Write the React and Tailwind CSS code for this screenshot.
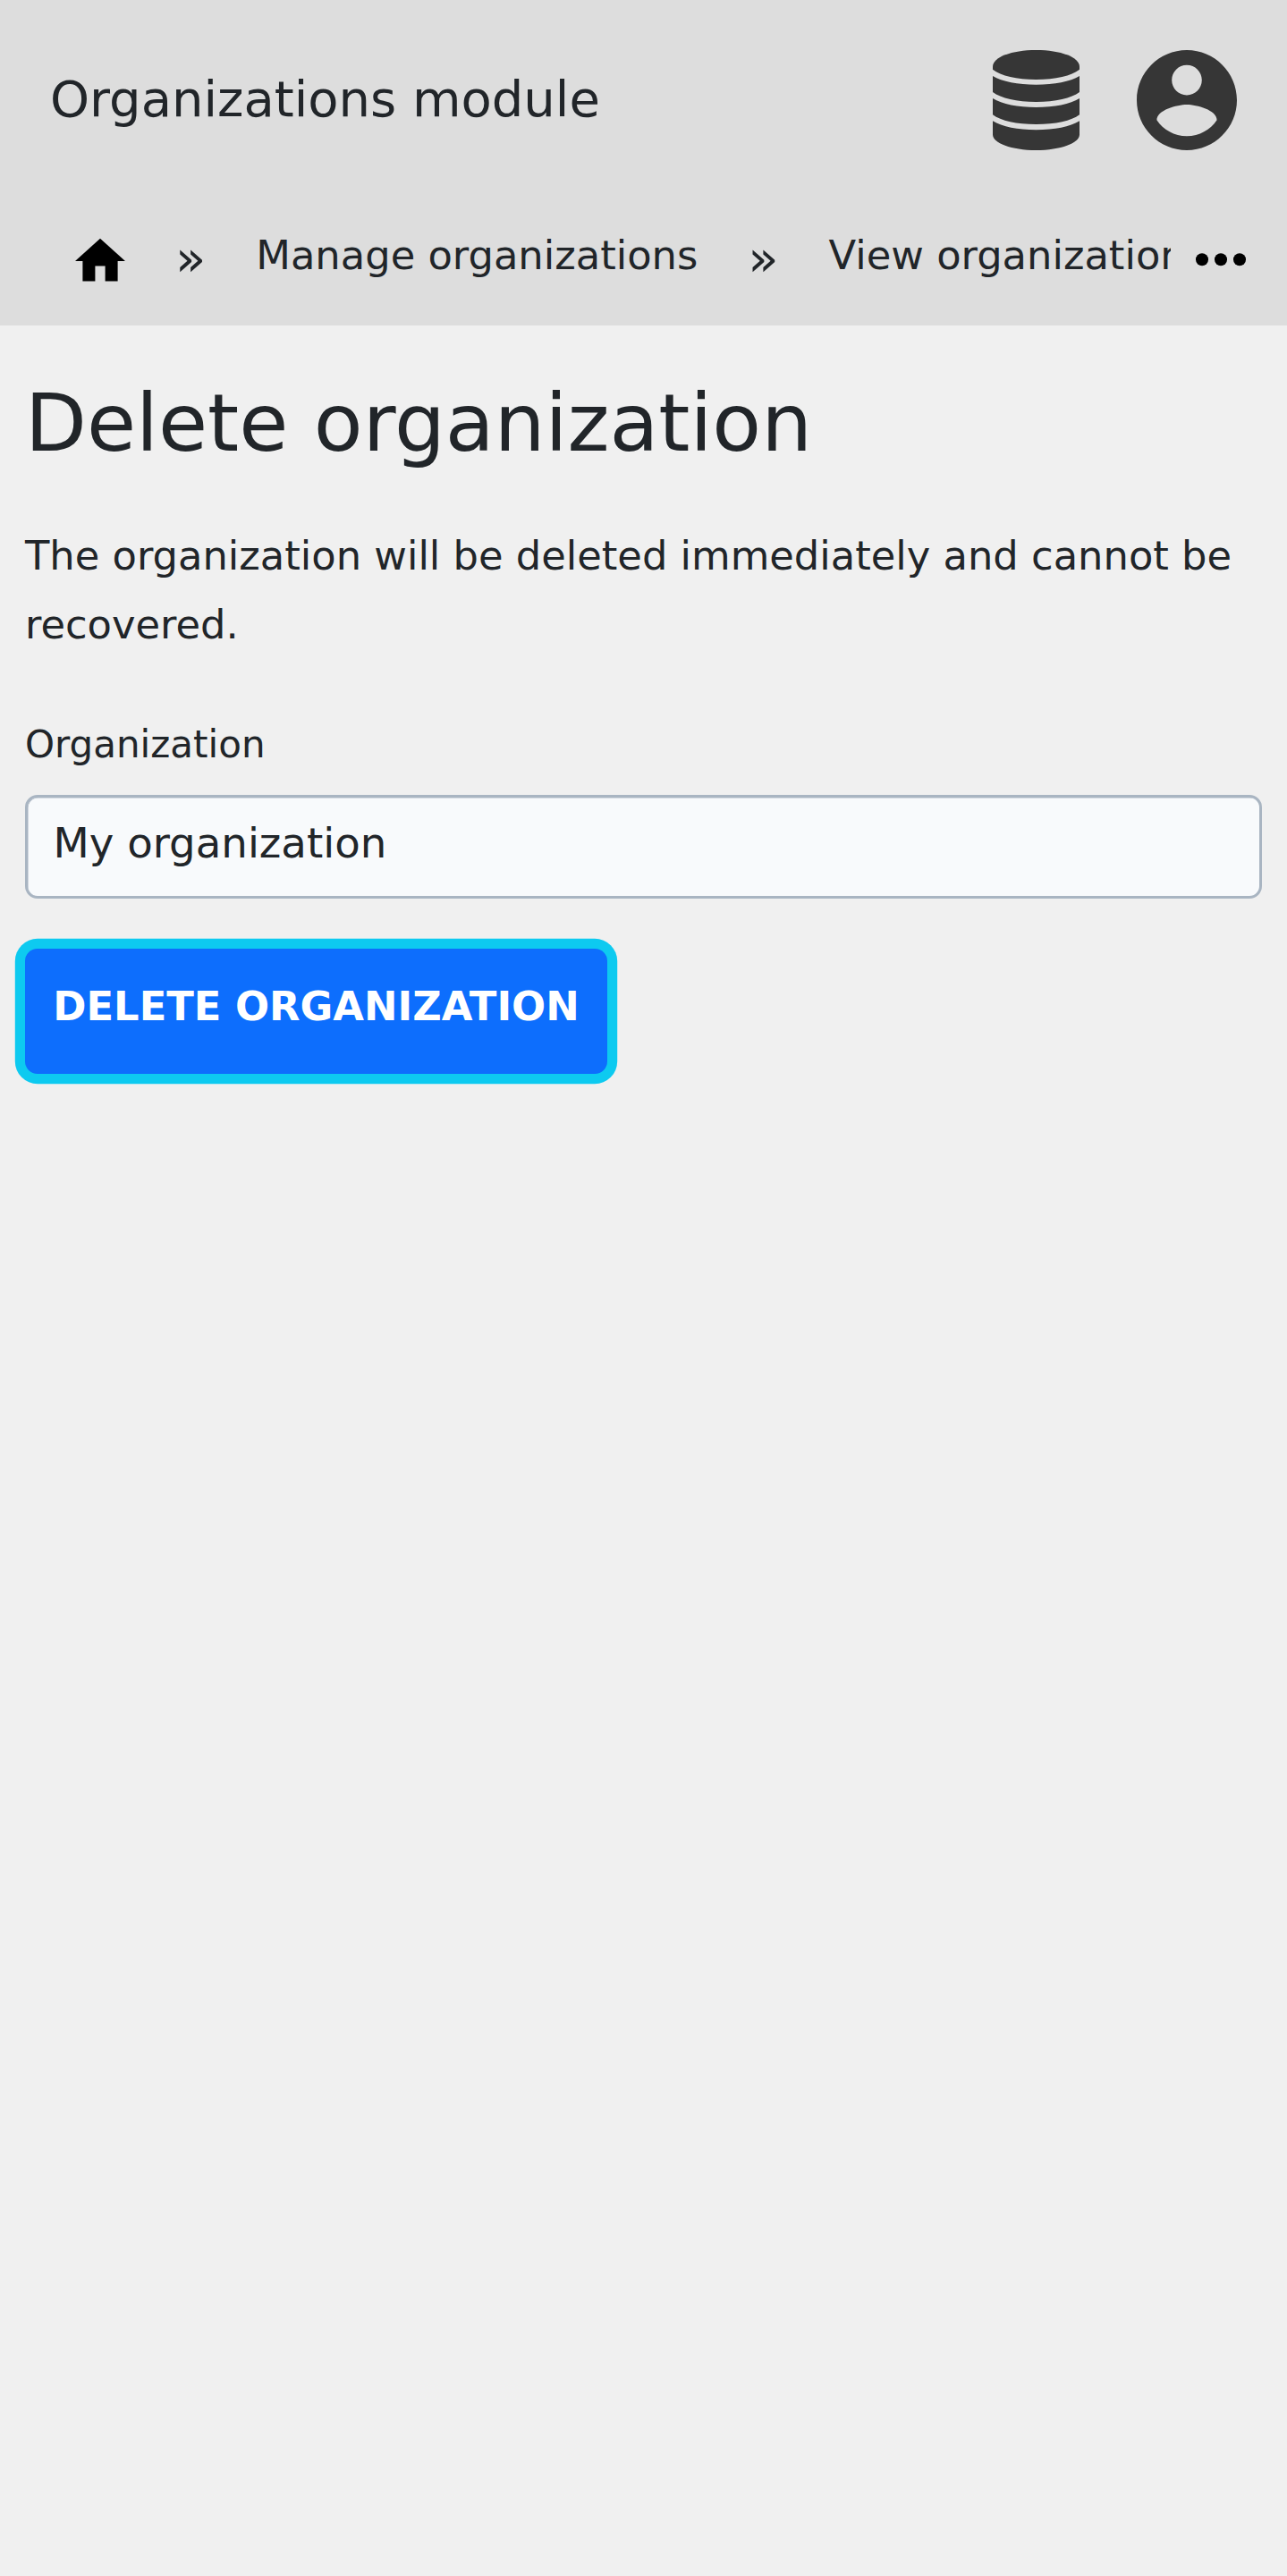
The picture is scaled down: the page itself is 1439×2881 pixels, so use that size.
function DatabaseIcon() {
  return (
    <svg className="h-[112px] w-[97px]" viewBox="0 0 97 112" fill="#363636">
      <path d="M0 18.5C0 8 21 0 48.500 0S97 8 97 18.500V21.700C88 28.800 70 33 48.500 33S9 28.800 0 21.700z" />
      <path d="M0 29C10.500 35.300 28 38.700 48.500 38.700S86.500 35.300 97 29V47C88 53.800 70 58 48.500 58S9 53.800 0 47z" />
      <path d="M0 54C10.500 60.500 28 64 48.500 64S86.500 60.500 97 54V72.200C88 79 70 83 48.500 83S9 79 0 72.200z" />
      <path d="M0 79.200C10.500 85.600 28 89.200 48.500 89.200S86.500 85.600 97 79.200V94.500C97 104 76 112 48.500 112S0 104 0 94.500z" />
    </svg>
  );
}

function AccountIcon() {
  return (
    <svg className="size-[112px]" viewBox="2 2 20 20" fill="#363636">
      <path d="M12 2C6.480 2 2 6.480 2 12s4.480 10 10 10 10-4.480 10-10S17.520 2 12 2zm0 3c1.660 0 3 1.340 3 3s-1.340 3-3 3-3-1.340-3-3 1.340-3 3-3zm0 14.200c-2.500 0-4.710-1.280-6-3.220.03-1.990 4-3.080 6-3.080 1.990 0 5.970 1.090 6 3.080-1.290 1.940-3.500 3.220-6 3.220z" />
    </svg>
  );
}

function HomeIcon() {
  return (
    <svg className="mt-[24px] size-[56px] shrink-0" viewBox="2 2 20 20">
      <path d="M10 20v-6h4v6h5v-8h3L12 3 2 12h3v8z" />
    </svg>
  );
}

function MoreIcon() {
  return (
    <svg className="mt-[36px] h-[28px] w-[56px]" viewBox="0 0 56 28">
      <circle cx="7" cy="14.300" r="7" />
      <circle cx="28" cy="14.300" r="7" />
      <circle cx="49" cy="14.300" r="7" />
    </svg>
  );
}

function Crumb({ children }) {
  return (
    <li className="flex shrink-0 items-start">
      <span className="mt-[13px] px-[56px] text-[56px] leading-[71px]">»</span>
      <a className="mt-[7px] text-[44.8px] leading-[77px]">{children}</a>
    </li>
  );
}

export default function App() {
  return (
    <div className="min-h-[2881px] w-full bg-[#f0f0f0] font-['DejaVu_Sans',sans-serif] text-[#212529]">
      <header className="h-[364px] bg-[#dddddd]">
        <div className="flex h-[224px] items-center justify-between px-[56px]">
          <span className="pb-[3px] text-[56px] leading-[85px]">Organizations module</span>
          <div className="flex items-center gap-[64px]">
            <DatabaseIcon />
            <AccountIcon />
          </div>
        </div>
        <nav className="flex h-[140px] items-start pt-[16px]">
          <ol className="flex h-[124px] w-[1309px] items-start overflow-hidden whitespace-nowrap pl-[84px]">
            <li className="shrink-0">
              <HomeIcon />
            </li>
            <Crumb>Manage organizations</Crumb>
            <Crumb>View organization</Crumb>
          </ol>
          <button className="ml-[28px]" aria-label="More">
            <MoreIcon />
          </button>
        </nav>
      </header>
      <main className="px-[28px] pt-[53px]">
        <h1 className="text-[89.6px] leading-[112px]">Delete organization</h1>
        <p className="mt-[54px] text-[44.8px] leading-[77px]">
          The organization will be deleted immediately and cannot be recovered.
        </p>
        <label className="mt-[63px] block text-[42px] leading-[65px]">Organization</label>
        <div className="mt-[24px] h-[115.500px] rounded-[14px] border-[3px] border-[#a9b5c2] bg-[#f8fafc] pl-[28.5px] pt-[16px] text-[46.67px] leading-[70px] shadow-[inset_0.5px_0.5px_0_0_#a9b5c2]">
          My organization
        </div>
        <button className="mt-[56px] block h-[140px] w-[651px] whitespace-nowrap rounded-[14px] bg-[#0d6efd] pb-[11px] text-center text-[44.8px] leading-[77px] font-bold text-white shadow-[0_0_0_11.2px_#0dcaf0]">
          DELETE ORGANIZATION
        </button>
      </main>
    </div>
  );
}
